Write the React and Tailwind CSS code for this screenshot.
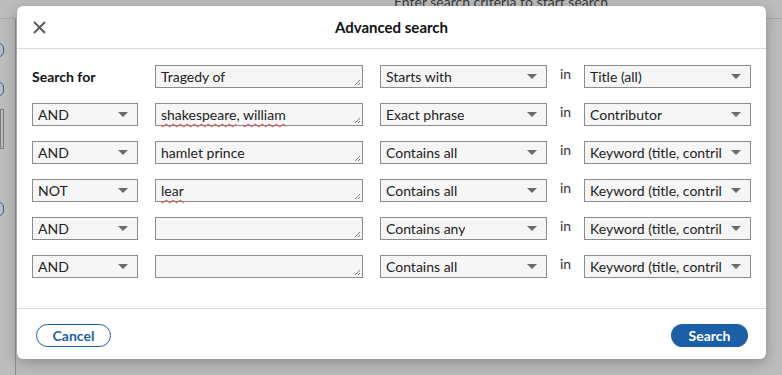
import React from "react";

const rows = [
  { op: null, text: "Tragedy of", match: "Starts with", field: "Title (all)" },
  { op: "AND", text: [["shakespeare", true], [", ", false], ["william", true]], match: "Exact phrase", field: "Contributor" },
  { op: "AND", text: "hamlet prince", match: "Contains all", field: "Keyword (title, contril" },
  { op: "NOT", text: [["lear", true]], match: "Contains all", field: "Keyword (title, contril" },
  { op: "AND", text: "", match: "Contains any", field: "Keyword (title, contril" },
  { op: "AND", text: "", match: "Contains all", field: "Keyword (title, contril" },
];

function Caret() {
  return (
    <svg width="10" height="5" viewBox="0 0 10 5" className="shrink-0">
      <path d="M0 0 L10 0 L5 5 Z" fill="#6b6b6b" />
    </svg>
  );
}

function Select({ value, width }) {
  return (
    <div className={`${width} h-[23px] flex items-center justify-between border border-[#8c8c8c] bg-[#f6f6f6] pl-[5px] pr-[9px] text-[#222] overflow-hidden`}>
      <span className="whitespace-nowrap overflow-hidden">{value}</span>
      <Caret />
    </div>
  );
}

function TextBox({ text }) {
  let content = text;
  if (Array.isArray(text)) {
    content = text.map(([t, bad], i) =>
      bad ? (
        <span key={i} className="underline decoration-wavy decoration-[#e53935] decoration-1 underline-offset-[3px]">{t}</span>
      ) : (
        <span key={i}>{t}</span>
      )
    );
  }
  return (
    <div className="relative w-[208px] h-[23px] flex items-center border border-[#8c8c8c] bg-[#f6f6f6] px-[5px] text-[#222]">
      <span className="whitespace-nowrap">{content}</span>
      <svg width="7" height="7" viewBox="0 0 7 7" className="absolute right-[1px] bottom-[1px]">
        <path d="M6 1 L1 6 M6 4 L4 6" stroke="#7a7a7a" strokeWidth="1" />
      </svg>
    </div>
  );
}

export default function App() {
  return (
    <div className="relative w-[782px] h-[375px] overflow-hidden bg-[#bcbcbc]" style={{ fontFamily: "Lato, 'Noto Sans', sans-serif" }}>
      {/* page behind the overlay */}
      <div className="h-[19px] border-b border-[#a9a9a9] flex justify-center">
        <span className="text-[14px] text-[#3a3a3a] pl-[220px] -mt-[9px]">Enter search criteria to start search</span>
      </div>
      <div className="absolute left-0 top-[19px] w-[16px] h-[356px] border-r border-[#8f8f8f]">
        <div className="absolute -left-[6px] top-[24px] w-[10px] h-[14px] rounded-full border border-[#2d5f9a]" />
        <div className="absolute -left-[6px] top-[63px] w-[10px] h-[14px] rounded-full border border-[#2d5f9a]" />
        <div className="absolute -left-[6px] top-[183px] w-[10px] h-[14px] rounded-full border border-[#2d5f9a]" />
        <div className="absolute left-0 top-[90px] w-[4px] h-[40px] border border-[#7a7a7a]" />
      </div>

      {/* dialog */}
      <div className="absolute left-[17px] top-[6px] w-[749px] h-[353px] bg-white rounded-[6px] shadow-[0_4px_14px_rgba(0,0,0,0.25)] flex flex-col text-[14px]">
        <div className="relative h-[43px] shrink-0 flex items-center justify-center border-b border-[#dadada]">
          <svg width="13" height="13" viewBox="0 0 13 13" className="absolute left-[16px] top-[15px]">
            <path d="M1 1 L12 12 M12 1 L1 12" stroke="#555" strokeWidth="1.8" />
          </svg>
          <span className="font-bold text-[15px] text-[#111] mt-[1px]">Advanced search</span>
        </div>

        <div className="flex-1 flex flex-col gap-[15px] pt-[16px] px-[15px]">
          {rows.map((r, i) => (
            <div key={i} className="flex items-center h-[23px]">
              {r.op ? (
                <Select value={r.op} width="w-[106px]" />
              ) : (
                <div className="w-[106px] font-bold text-[#111]">Search for</div>
              )}
              <div className="ml-[17px]">
                <TextBox text={r.text} />
              </div>
              <div className="ml-[17px]">
                <Select value={r.match} width="w-[167px]" />
              </div>
              <span className="w-[37px] text-center self-start -mt-[2px] text-[#333]">in</span>
              <Select value={r.field} width="w-[167px]" />
            </div>
          ))}
        </div>

        <div className="h-[51px] shrink-0 border-t border-[#dadada] flex items-center justify-between pt-[3px] pl-[19px] pr-[18px]">
          <button className="h-[23px] w-[75px] rounded-full border border-[#1d5fa6] text-[#1d5fa6] font-bold text-[14px] bg-white">Cancel</button>
          <button className="h-[23px] w-[77px] rounded-full bg-[#1b5fa6] text-white font-bold text-[14px]">Search</button>
        </div>
      </div>
    </div>
  );
}
